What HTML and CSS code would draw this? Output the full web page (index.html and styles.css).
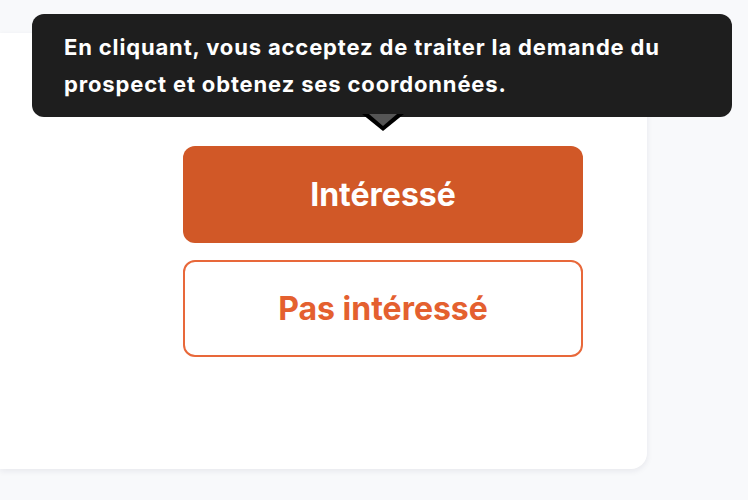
FILE: index.html
```html
<!DOCTYPE html>
<html lang="fr">
<head>
<meta charset="utf-8">
<link rel="stylesheet" href="styles.css">
</head>
<body>
<div class="card">
  <div class="actions">
    <button class="btn btn-primary">Intéressé</button>
    <button class="btn btn-outline">Pas intéressé</button>
  </div>
</div>
<div class="tooltip">
  En cliquant, vous acceptez de traiter la demande du prospect et obtenez ses coordonnées.
  <span class="arrow"></span>
</div>
</body>
</html>
```
FILE: styles.css
```css
html, body {
  margin: 0;
  padding: 0;
}
body {
  background: #f8f9fb;
  font-family: Inter, "Noto Sans", sans-serif;
  width: 748px;
  height: 500px;
  overflow: hidden;
  position: relative;
}
.card {
  margin-top: 33px;
  width: 647px;
  height: 436px;
  background: #ffffff;
  border-radius: 0 16px 16px 0;
  box-shadow: 0 2px 6px rgba(20, 30, 60, 0.08);
  box-sizing: border-box;
  padding: 113px 0 0 183px;
}
.actions {
  display: flex;
  flex-direction: column;
  gap: 17px;
  width: 400px;
}
.btn {
  height: 97px;
  border-radius: 12px;
  font-family: Inter, sans-serif;
  font-weight: 700;
  font-size: 32px;
  cursor: pointer;
}
.btn-primary {
  background: #d15827;
  color: #ffffff;
  border: none;
}
.btn-outline {
  background: #ffffff;
  color: #e4602f;
  border: 2px solid #e8683a;
}
.tooltip {
  position: absolute;
  left: 32px;
  top: 14px;
  width: 700px;
  height: 103px;
  box-sizing: border-box;
  padding: 15px 32px 0 32px;
  background: #1e1e1e;
  color: #ffffff;
  border-radius: 12px;
  font-size: 22px;
  font-weight: 700;
  letter-spacing: 0.85px;
  line-height: 37px;
}
.arrow {
  position: absolute;
  left: 330px;
  top: 100px;
  width: 0;
  height: 0;
  border-left: 21px solid transparent;
  border-right: 21px solid transparent;
  border-top: 17px solid #000;
}
.arrow::after {
  content: "";
  position: absolute;
  left: -14px;
  top: -17px;
  border-left: 14px solid transparent;
  border-right: 14px solid transparent;
  border-top: 12px solid #555;
}
```
